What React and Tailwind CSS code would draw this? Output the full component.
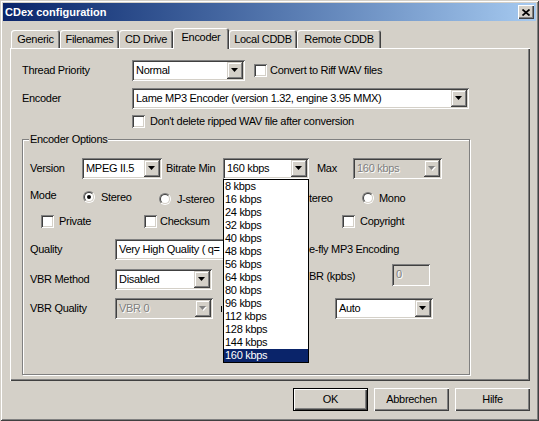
import React from 'react';

// classic win32 bevels
const SUNKEN = 'shadow-[inset_1px_1px_0_#808080,inset_-1px_-1px_0_#ffffff,inset_2px_2px_0_#404040,inset_-2px_-2px_0_#d4d0c8]';
const ARROW_BTN = 'shadow-[inset_-1px_-1px_0_#404040,inset_1px_1px_0_#d4d0c8,inset_-2px_-2px_0_#808080,inset_2px_2px_0_#ffffff]';
const PUSH_BTN = 'shadow-[inset_1px_1px_0_#ffffff,inset_-1px_-1px_0_#404040,inset_-2px_-2px_0_#808080]';

const BITRATES = [8, 16, 24, 32, 40, 48, 56, 64, 80, 96, 112, 128, 144, 160];

function Combo({ className = '', text, disabled }) {
  return (
    <div className={`flex h-[21px] shrink-0 p-[2px] ${SUNKEN} ${disabled ? 'bg-[#d4d0c8] text-[#808080] [text-shadow:1px_1px_0_#ffffff]' : 'bg-white'} ${className}`}>
      <div className="min-w-0 flex-1 overflow-hidden whitespace-nowrap pl-[2px] leading-[17px]">{text}</div>
      <div className={`flex h-[17px] w-[16px] shrink-0 items-center justify-center bg-[#d4d0c8] ${ARROW_BTN}`}>
        <svg width="8" height="5" viewBox="0 0 8 5">
          {disabled && <path d="M1 1h7L4.5 5z" fill="#ffffff" />}
          <path d="M0 0h7L3.5 4z" fill={disabled ? '#808080' : '#000000'} />
        </svg>
      </div>
    </div>
  );
}

const Check = () => <div className={`h-[13px] w-[13px] shrink-0 bg-white ${SUNKEN}`} />;

function Radio({ checked }) {
  return (
    <div className="h-[12px] w-[12px] shrink-0 rounded-full border border-t-[#808080] border-l-[#808080] border-r-white border-b-white">
      <div className="flex h-full w-full items-center justify-center rounded-full border border-t-[#404040] border-l-[#404040] border-r-[#d4d0c8] border-b-[#d4d0c8] bg-white">
        {checked && <div className="h-[4px] w-[4px] rounded-full bg-black" />}
      </div>
    </div>
  );
}

function Tab({ label, className, active }) {
  return (
    <div
      className={`flex shrink-0 items-center justify-center rounded-t-[3px] bg-[#d4d0c8] shadow-[inset_1px_1px_0_#ffffff,inset_-1px_0_0_#404040,inset_-2px_0_0_#808080] ${
        active ? 'relative z-10 h-[21px] pb-[2px]' : 'mt-[2px] h-[18px]'
      } ${className}`}
    >
      {label}
    </div>
  );
}

function Button({ label, isDefault }) {
  return (
    <div
      className={`flex h-[23px] w-[75px] items-center justify-center bg-[#d4d0c8] ${PUSH_BTN} ${
        isDefault ? 'border border-black' : ''
      }`}
    >
      {label}
    </div>
  );
}

export default function App() {
  return (
    <div className="relative flex h-[421px] w-[539px] flex-col overflow-hidden bg-[#d4d0c8] p-[3px] font-['Liberation_Sans',Arial,sans-serif] text-[11px] tracking-[-0.3px] text-black shadow-[inset_1px_1px_0_#d4d0c8,inset_-1px_-1px_0_#404040,inset_2px_2px_0_#ffffff,inset_-2px_-2px_0_#808080] select-none">
      {/* Title bar */}
      <div className="flex h-[18px] shrink-0 items-center bg-linear-to-r from-[#0a246a] to-[#a6caf0] px-[2px]">
        <span className="font-bold tracking-normal text-white">CDex configuration</span>
        <div className={`ml-auto flex h-[14px] w-[16px] items-center justify-center bg-[#d4d0c8] ${PUSH_BTN}`}>
          <svg width="8" height="7" viewBox="0 0 8 7">
            <path d="M0.5 0.5L7.5 6.5M7.5 0.5L0.5 6.5" stroke="#000" strokeWidth="1.7" />
          </svg>
        </div>
      </div>

      {/* Tabs */}
      <div className="ml-[8px] mt-[7px] flex h-[20px] items-start">
        <Tab label="Generic" className="w-[49px]" />
        <Tab label="Filenames" className="w-[59px]" />
        <Tab label="CD Drive" className="w-[54px]" />
        <Tab label="Encoder" className="w-[56px]" active />
        <Tab label="Local CDDB" className="w-[68px]" />
        <Tab label="Remote CDDB" className="w-[84px]" />
      </div>

      {/* Tab page */}
      <div className="ml-[7px] flex h-[333px] w-[520px] shrink-0 flex-col shadow-[inset_1px_1px_0_#ffffff,inset_-1px_-1px_0_#404040,inset_-2px_-2px_0_#808080]">
        <div className="mt-[12px] flex h-[21px] items-center pl-[12px]">
          <span className="w-[110px]">Thread Priority</span>
          <Combo className="w-[113px]" text="Normal" />
          <div className="ml-[9px]"><Check /></div>
          <span className="ml-[3px]">Convert to Riff WAV files</span>
        </div>

        <div className="mt-[7px] flex h-[21px] items-center pl-[12px]">
          <span className="w-[110px]">Encoder</span>
          <Combo className="w-[337px]" text="Lame MP3 Encoder (version 1.32, engine 3.95 MMX)" />
        </div>

        <div className="mt-[6px] flex h-[13px] items-center pl-[122px]">
          <Check />
          <span className="ml-[5px]">Don't delete ripped WAV file after conversion</span>
        </div>

        {/* Encoder Options group */}
        <div className="relative ml-[12px] mt-[11px] flex h-[236px] w-[448px] flex-col border border-[#808080] shadow-[1px_1px_0_#ffffff,inset_1px_1px_0_#ffffff]">
          <span className="absolute -top-[7px] left-[6px] bg-[#d4d0c8] px-[1px] leading-[13px]">Encoder Options</span>

          <div className="mt-[18px] flex h-[21px] items-center">
            <span className="ml-[7px] w-[52px]">Version</span>
            <Combo className="w-[80px]" text="MPEG II.5" />
            <span className="ml-[4px] w-[57px]">Bitrate Min</span>
            <div className="relative w-[86px] shrink-0">
              <Combo className="w-full" text="160 kbps" />
              {/* open drop-down list */}
              <div className="absolute left-0 top-[21px] z-20 w-[86px] border border-black bg-white">
                {BITRATES.map((b) => (
                  <div
                    key={b}
                    className={`h-[13px] pl-[1px] leading-[13px] ${b === 160 ? 'bg-[#0a246a] text-white' : ''}`}
                  >
                    {b} kbps
                  </div>
                ))}
              </div>
            </div>
            <span className="ml-[8px] w-[36px]">Max</span>
            <Combo className="w-[89px]" text="160 kbps" disabled />
          </div>

          <div className="mt-[12px] flex h-[14px] items-start">
            <span className="-mt-[2px] ml-[7px] w-[53px] leading-[12px]">Mode</span>
            <div className="flex w-[76px] shrink-0 items-center">
              <Radio checked />
              <span className="ml-[6px] leading-[12px]">Stereo</span>
            </div>
            <div className="mt-[2px] flex w-[101px] shrink-0 items-center">
              <Radio />
              <span className="ml-[6px] leading-[12px]">J-stereo</span>
            </div>
            <div className="mt-[1px] flex w-[102px] shrink-0 items-center">
              <span className="ml-[49px] leading-[12px]">tereo</span>
            </div>
            <div className="mt-[1px] flex shrink-0 items-center">
              <Radio />
              <span className="ml-[5px] leading-[12px]">Mono</span>
            </div>
          </div>

          <div className="mt-[10px] flex h-[13px] items-center">
            <div className="ml-[18px] flex w-[103px] shrink-0 items-center">
              <Check />
              <span className="ml-[5px]">Private</span>
            </div>
            <div className="flex w-[100px] shrink-0 items-center">
              <Check />
              <span className="ml-[3px]">Checksum</span>
            </div>
            <div className="ml-[98px] flex shrink-0 items-center">
              <Check />
              <span className="ml-[5px]">Copyright</span>
            </div>
          </div>

          <div className="mt-[11px] flex h-[21px] items-center">
            <span className="ml-[7px] w-[85px]">Quality</span>
            <Combo className="w-[135px]" text="Very High Quality ( q=" />
            <span className="ml-[59px]">e-fly MP3 Encoding</span>
          </div>

          <div className="mt-[9px] flex h-[21px] items-center">
            <span className="ml-[7px] w-[85px]">VBR Method</span>
            <Combo className="w-[97px]" text="Disabled" />
            <span className="mb-[6px] ml-[97px] w-[83px]">BR (kpbs)</span>
            <div className={`-mt-[5px] h-[22px] w-[38px] shrink-0 self-start bg-[#d4d0c8] pl-[4px] pt-[3px] leading-[14px] text-[#808080] [text-shadow:1px_1px_0_#ffffff] ${SUNKEN}`}>
              0
            </div>
          </div>

          <div className="mt-[8px] flex h-[21px] items-center">
            <span className="ml-[7px] w-[85px]">VBR Quality</span>
            <Combo className="w-[98px]" text="VBR 0" disabled />
            <div className="ml-[8px] h-[6px] w-[1px] shrink-0 bg-black" />
            <Combo className="ml-[113px] w-[98px]" text="Auto" />
          </div>
        </div>
      </div>

      {/* Buttons */}
      <div className="mt-[7px] flex justify-end gap-[6px] pr-[6px]">
        <Button label="OK" isDefault />
        <Button label="Abbrechen" />
        <Button label="Hilfe" />
      </div>
    </div>
  );
}
